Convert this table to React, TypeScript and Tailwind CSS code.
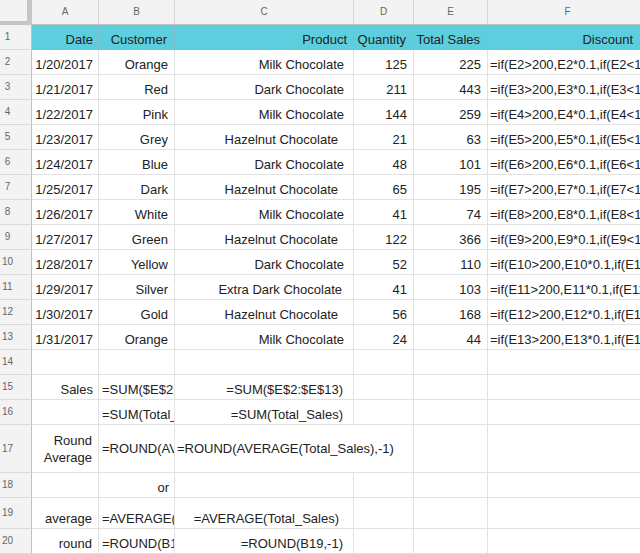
import React from "react";

type Row = [string, string, string, string, string];

const data: Row[] = [
  ["1/20/2017", "Orange", "Milk Chocolate", "125", "225"],
  ["1/21/2017", "Red", "Dark Chocolate", "211", "443"],
  ["1/22/2017", "Pink", "Milk Chocolate", "144", "259"],
  ["1/23/2017", "Grey", "Hazelnut Chocolate", "21", "63"],
  ["1/24/2017", "Blue", "Dark Chocolate", "48", "101"],
  ["1/25/2017", "Dark", "Hazelnut Chocolate", "65", "195"],
  ["1/26/2017", "White", "Milk Chocolate", "41", "74"],
  ["1/27/2017", "Green", "Hazelnut Chocolate", "122", "366"],
  ["1/28/2017", "Yellow", "Dark Chocolate", "52", "110"],
  ["1/29/2017", "Silver", "Extra Dark Chocolate", "41", "103"],
  ["1/30/2017", "Gold", "Hazelnut Chocolate", "56", "168"],
  ["1/31/2017", "Orange", "Milk Chocolate", "24", "44"],
];

const productPad: Record<string, string> = {
  "Milk Chocolate": "pr-[9px]",
  "Dark Chocolate": "pr-[9px]",
  "Hazelnut Chocolate": "pr-[15px]",
  "Extra Dark Chocolate": "pr-[11px]",
};

const base =
  "flex overflow-hidden whitespace-nowrap border-b border-r text-[13px] leading-[15px] text-[#222]";
const body = base + " border-[#e2e2e2] bg-white";
const right = body + " items-end justify-end pb-[2px]";
const left = body + " items-end justify-start pb-[2px] pl-[2px]";
const teal =
  base + " border-[#7dbfc8] bg-[#5ccedd] items-end justify-end pb-[2px]";

function RowHead({ n }: { n: number }) {
  return (
    <div className="flex items-center border-b border-r border-b-[#dadada] border-r-[#c0c0c0] bg-[#f3f3f3]">
      <span className="w-[15px] text-center text-[10px] leading-[12px] text-[#666]">
        {n}
      </span>
    </div>
  );
}

function ColHead({ l }: { l: string }) {
  return (
    <div className="flex items-center justify-center border-b border-r border-b-[#c0c0c0] border-r-[#d6d6d6] bg-[#f3f3f3] text-[10px] leading-[12px] text-[#666]">
      {l}
    </div>
  );
}

export default function App() {
  return (
    <div
      className="h-[554px] w-[640px] overflow-hidden bg-white"
      style={{ fontFamily: '"Liberation Sans", Arial, sans-serif' }}
    >
      <div className="grid grid-cols-[32px_67px_76px_179px_60px_74px_160px] grid-rows-[25px_repeat(16,25px)_48px_25px_31px_25px]">
        {/* column headers */}
        <div className="border-b-[4px] border-r-[5px] border-[#c6c6c6] bg-[#f3f3f3]" />
        <ColHead l="A" />
        <ColHead l="B" />
        <ColHead l="C" />
        <ColHead l="D" />
        <ColHead l="E" />
        <ColHead l="F" />

        {/* row 1 */}
        <RowHead n={1} />
        <div className={teal + " pr-[5px]"}>Date</div>
        <div className={teal + " pr-[7px]"}>Customer</div>
        <div className={teal + " pr-[6px]"}>Product</div>
        <div className={teal + " pr-[7px]"}>Quantity</div>
        <div className={teal + " pr-[7px]"}>Total Sales</div>
        <div className={teal + " pr-[14px]"}>Discount</div>

        {data.map((r, i) => {
          const n = i + 2;
          return (
            <React.Fragment key={n}>
              <RowHead n={n} />
              <div className={right + " pr-[5px]"}>{r[0]}</div>
              <div className={right + " pr-[6px]"}>{r[1]}</div>
              <div className={right + " " + productPad[r[2]]}>{r[2]}</div>
              <div className={right + " pr-[6px]"}>{r[3]}</div>
              <div className={right + " pr-[6px]"}>{r[4]}</div>
              <div className={left}>
                {`=if(E${n}>200,E${n}*0.1,if(E${n}<100,E${n}*0.05,0))`}
              </div>
            </React.Fragment>
          );
        })}

        {/* row 14 */}
        <RowHead n={14} />
        <div className={right} />
        <div className={right} />
        <div className={right} />
        <div className={right} />
        <div className={right} />
        <div className={right} />

        {/* row 15 */}
        <RowHead n={15} />
        <div className={right + " pr-[5px]"}>Sales</div>
        <div className={left + " pl-[3px]"}>=SUM($E$2:$E$13)</div>
        <div className={right + " pr-[10px]"}>=SUM($E$2:$E$13)</div>
        <div className={right} />
        <div className={right} />
        <div className={right} />

        {/* row 16 */}
        <RowHead n={16} />
        <div className={right} />
        <div className={left + " pl-[3px]"}>=SUM(Total_Sales)</div>
        <div className={right + " pr-[10px]"}>=SUM(Total_Sales)</div>
        <div className={right} />
        <div className={right} />
        <div className={right} />

        {/* row 17 */}
        <RowHead n={17} />
        <div className={body + " items-center justify-end pr-[6px]"}>
          <div className="text-right leading-[17px]">
            <div>Round</div>
            <div>Average</div>
          </div>
        </div>
        <div className={body + " items-center justify-start pl-[3px]"}>
          =ROUND(AVERAGE(Total_Sales),-1)
        </div>
        <div className={body + " col-span-2 items-center justify-start pl-[2px]"}>
          =ROUND(AVERAGE(Total_Sales),-1)
        </div>
        <div className={right} />
        <div className={right} />

        {/* row 18 */}
        <RowHead n={18} />
        <div className={right} />
        <div className={right + " pr-[5px]"}>or</div>
        <div className={right} />
        <div className={right} />
        <div className={right} />
        <div className={right} />

        {/* row 19 */}
        <RowHead n={19} />
        <div className={right + " pr-[6px]"}>average</div>
        <div className={left + " pl-[3px]"}>=AVERAGE(Total_Sales)</div>
        <div className={right + " pr-[14px]"}>=AVERAGE(Total_Sales)</div>
        <div className={right} />
        <div className={right} />
        <div className={right} />

        {/* row 20 */}
        <RowHead n={20} />
        <div className={right + " pr-[6px]"}>round</div>
        <div className={left + " pl-[3px]"}>=ROUND(B19,-1)</div>
        <div className={right + " pr-[10px]"}>=ROUND(B19,-1)</div>
        <div className={right} />
        <div className={right} />
        <div className={right} />
      </div>
    </div>
  );
}
